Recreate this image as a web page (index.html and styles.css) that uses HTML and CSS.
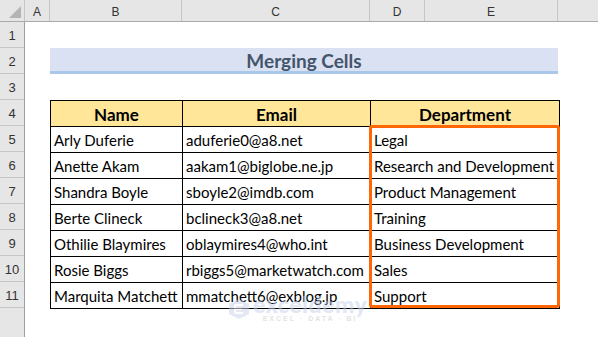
FILE: index.html
```html
<!DOCTYPE html>
<html>
<head>
<meta charset="utf-8">
<link rel="stylesheet" href="styles.css">
</head>
<body>
<div class="sheet">
  <div class="colbar">
    <div class="corner"><span class="tri"></span></div>
    <div class="ch w-a">A</div>
    <div class="ch w-b">B</div>
    <div class="ch w-c">C</div>
    <div class="ch w-d">D</div>
    <div class="ch w-e">E</div>
    <div class="ch w-f"></div>
  </div>
  <div class="body">
    <div class="rowbar">
      <div class="rh">1</div><div class="rh">2</div><div class="rh">3</div><div class="rh">4</div>
      <div class="rh">5</div><div class="rh">6</div><div class="rh">7</div><div class="rh">8</div>
      <div class="rh">9</div><div class="rh">10</div><div class="rh">11</div><div class="rh rest"></div>
    </div>
    <div class="grid">
      <div class="spacer"></div>
      <div class="title">Merging Cells</div>
      <div class="spacer"></div>
      <div class="tablewrap">
        <table class="data">
          <colgroup><col class="cb"><col class="cc"><col class="cd"></colgroup>
          <thead>
            <tr><th>Name</th><th>Email</th><th>Department</th></tr>
          </thead>
          <tbody>
            <tr><td>Arly Duferie</td><td>aduferie0@a8.net</td><td>Legal</td></tr>
            <tr><td>Anette Akam</td><td>aakam1@biglobe.ne.jp</td><td>Research and Development</td></tr>
            <tr><td>Shandra Boyle</td><td>sboyle2@imdb.com</td><td>Product Management</td></tr>
            <tr><td>Berte Clineck</td><td>bclineck3@a8.net</td><td>Training</td></tr>
            <tr><td>Othilie Blaymires</td><td>oblaymires4@who.int</td><td>Business Development</td></tr>
            <tr><td>Rosie Biggs</td><td>rbiggs5@marketwatch.com</td><td>Sales</td></tr>
            <tr><td>Marquita Matchett</td><td>mmatchett6@exblog.jp</td><td>Support</td></tr>
          </tbody>
        </table>
        <div class="highlight"></div>
        <div class="watermark">
          <svg class="wm-icon" width="22" height="22" viewBox="0 0 22 22">
            <path d="M11 1 L21 6 L21 16 L11 21 L1 16 L1 6 Z" fill="#c9d3ea"/>
            <path d="M7 7 L15 7 M7 11 L14 11 M7 15 L15 15 M7 7 L7 15" stroke="#ffffff" stroke-width="2" fill="none"/>
          </svg>
          <div class="wm-text">
            <div class="wm-name">exceldemy</div>
            <div class="wm-tag">EXCEL · DATA · BI</div>
          </div>
        </div>
      </div>
    </div>
  </div>
</div>
</body>
</html>
```
FILE: styles.css
```css
html, body {
  margin: 0;
  padding: 0;
  background: #ffffff;
}
.sheet {
  width: 598px;
  height: 337px;
  overflow: hidden;
  font-family: "Lato", "Open Sans", sans-serif;
}
.colbar {
  display: flex;
  height: 22px;
  background: #e6e6e6;
  border-bottom: 1px solid #ababab;
  box-sizing: border-box;
}
.corner {
  width: 25px;
  position: relative;
  border-right: 1px solid #c6c6c6;
  box-sizing: border-box;
}
.tri {
  position: absolute;
  right: 3px;
  bottom: 3px;
  width: 0;
  height: 0;
  border-left: 12px solid transparent;
  border-bottom: 12px solid #b4b4b4;
}
.ch {
  box-sizing: border-box;
  border-right: 1px solid #c6c6c6;
  font-family: "Liberation Sans", sans-serif;
  font-size: 12px;
  color: #333333;
  display: flex;
  align-items: center;
  justify-content: center;
  padding-top: 2px;
}
.w-a { width: 25px; }
.w-b { width: 132px; }
.w-c { width: 188px; }
.w-d { width: 55px; }
.w-e { width: 133px; }
.w-f { flex: 1; border-right: none; }
.body {
  display: flex;
}
.rowbar {
  width: 25px;
  flex: none;
  background: #e6e6e6;
  border-right: 1px solid #9f9f9f;
  box-sizing: border-box;
  display: flex;
  flex-direction: column;
}
.rh {
  height: 26px;
  box-sizing: border-box;
  border-bottom: 1px solid #c6c6c6;
  font-family: "Liberation Sans", sans-serif;
  font-size: 13px;
  color: #333333;
  display: flex;
  align-items: flex-end;
  justify-content: center;
  padding-bottom: 4px;
}
.rh.rest {
  height: 40px;
  border-bottom: none;
}
.grid {
  padding-left: 25px;
  display: flex;
  flex-direction: column;
}
.spacer {
  height: 26px;
}
.title {
  width: 508px;
  height: 26px;
  box-sizing: border-box;
  background: #d9e1f2;
  border-bottom: 3px solid #a9c7e8;
  color: #44546a;
  font-weight: 700;
  font-size: 19px;
  display: flex;
  align-items: center;
  justify-content: center;
  padding-top: 2px;
}
.tablewrap {
  position: relative;
  width: 509px;
}
.data {
  border-collapse: collapse;
  table-layout: fixed;
  width: 509px;
}
.cb { width: 132px; }
.cc { width: 188px; }
.cd { width: 189px; }
.data th, .data td {
  border: 1px solid #000000;
  height: 25px;
  padding: 0 3px;
  font-size: 15px;
  color: #000000;
  white-space: nowrap;
  overflow: hidden;
  vertical-align: bottom;
  line-height: 23px;
}
.data th {
  background: #ffe699;
  font-weight: 700;
  font-size: 17px;
  text-align: center;
}
.data td {
  text-align: left;
}
.highlight {
  position: absolute;
  left: 319px;
  top: 25px;
  width: 191px;
  height: 183px;
  box-sizing: border-box;
  border: 3px solid #ff6606;
  border-radius: 3px;
  pointer-events: none;
}
.watermark {
  position: absolute;
  left: 178px;
  top: 195px;
  display: flex;
  align-items: center;
  gap: 3px;
  opacity: 0.5;
  pointer-events: none;
}
.wm-text {
  display: flex;
  flex-direction: column;
  align-items: center;
}
.wm-name {
  font-family: "Lato", sans-serif;
  font-weight: 900;
  font-size: 23px;
  color: #c4d0ea;
  line-height: 19px;
  letter-spacing: 0.5px;
}
.wm-tag {
  font-family: "Liberation Sans", sans-serif;
  font-size: 7px;
  line-height: 8px;
  font-weight: 700;
  color: #c8c8c8;
  letter-spacing: 2px;
  margin-top: 1px;
}
```
